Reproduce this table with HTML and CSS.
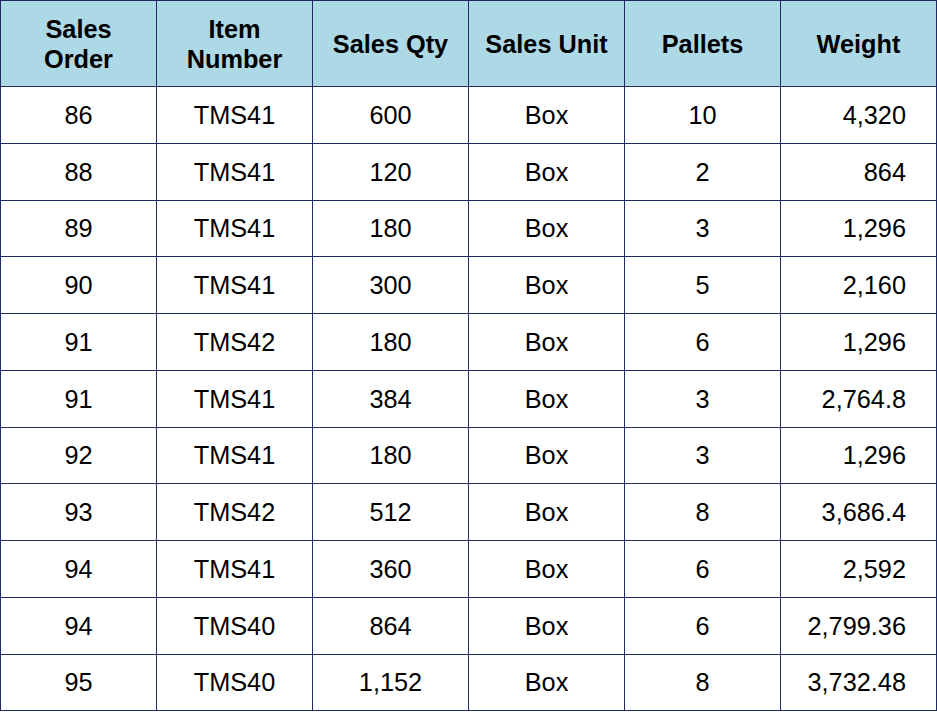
FILE: index.html
```html
<!DOCTYPE html>
<html>
<head>
<meta charset="utf-8">
<link rel="stylesheet" href="styles.css">
</head>
<body>
<table class="orders">
  <colgroup>
    <col class="c"><col class="c"><col class="c"><col class="c"><col class="c"><col class="c">
  </colgroup>
  <thead>
    <tr class="head">
      <th>Sales<br>Order</th>
      <th>Item<br>Number</th>
      <th>Sales Qty</th>
      <th>Sales Unit</th>
      <th>Pallets</th>
      <th>Weight</th>
    </tr>
  </thead>
  <tbody>
    <tr><td>86</td><td>TMS41</td><td>600</td><td>Box</td><td>10</td><td class="num">4,320</td></tr>
    <tr><td>88</td><td>TMS41</td><td>120</td><td>Box</td><td>2</td><td class="num">864</td></tr>
    <tr><td>89</td><td>TMS41</td><td>180</td><td>Box</td><td>3</td><td class="num">1,296</td></tr>
    <tr><td>90</td><td>TMS41</td><td>300</td><td>Box</td><td>5</td><td class="num">2,160</td></tr>
    <tr><td>91</td><td>TMS42</td><td>180</td><td>Box</td><td>6</td><td class="num">1,296</td></tr>
    <tr><td>91</td><td>TMS41</td><td>384</td><td>Box</td><td>3</td><td class="num">2,764.8</td></tr>
    <tr><td>92</td><td>TMS41</td><td>180</td><td>Box</td><td>3</td><td class="num">1,296</td></tr>
    <tr><td>93</td><td>TMS42</td><td>512</td><td>Box</td><td>8</td><td class="num">3,686.4</td></tr>
    <tr><td>94</td><td>TMS41</td><td>360</td><td>Box</td><td>6</td><td class="num">2,592</td></tr>
    <tr><td>94</td><td>TMS40</td><td>864</td><td>Box</td><td>6</td><td class="num">2,799.36</td></tr>
    <tr><td>95</td><td>TMS40</td><td>1,152</td><td>Box</td><td>8</td><td class="num">3,732.48</td></tr>
  </tbody>
</table>
</body>
</html>
```
FILE: styles.css
```css
html, body {
  margin: 0;
  padding: 0;
  background: #ffffff;
}

.orders {
  border-collapse: collapse;
  table-layout: fixed;
  width: 937px;
  font-family: "Liberation Sans", Arial, sans-serif;
  font-size: 25.3px;
  color: #000000;
}

.orders .c {
  width: 156px;
}

.orders th,
.orders td {
  border: 1px solid #1f2b60;
  text-align: center;
  vertical-align: middle;
  padding: 0;
}

.orders th {
  background: #add8e6;
  font-weight: bold;
  line-height: 30px;
  height: 85px;
}

.orders td {
  height: 55.75px;
  line-height: 28px;
}

.orders td.num {
  text-align: right;
  padding-right: 30px;
}
```
